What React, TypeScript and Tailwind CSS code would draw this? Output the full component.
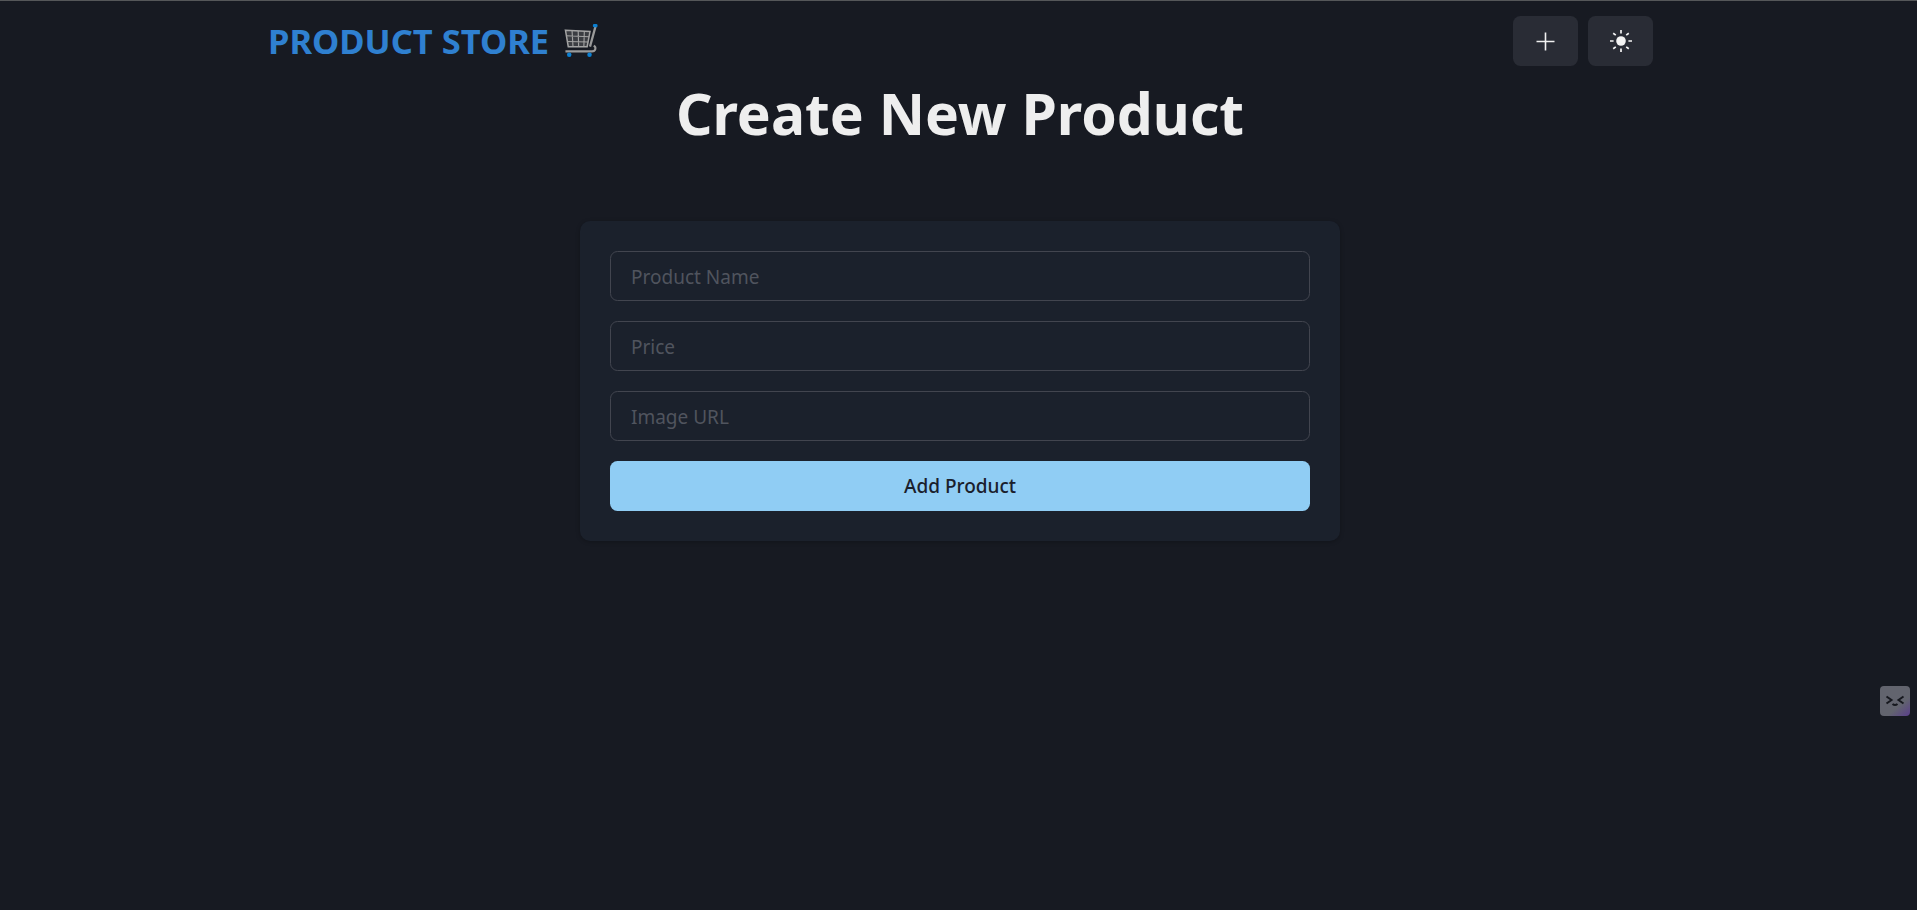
export default function App() {
  return (
    <div className="relative h-screen w-full overflow-hidden border-t border-[#555759] bg-[#171a22] font-['Noto_Sans','Open_Sans',sans-serif]">
      <div className="mx-auto w-[1920px]">
        {/* Navbar */}
        <nav className="mx-auto flex h-[80px] w-[1386px] items-center justify-between pl-[1px]">
          <div className="flex items-center gap-[15px]">
            <span className="text-[34.5px] font-bold leading-none text-[#2f80d0]">PRODUCT STORE</span>
            <CartIcon />
          </div>
          <div className="flex items-center gap-[10px]">
            <button className="flex h-[50px] w-[65px] items-center justify-center rounded-[7.5px] bg-[#292c35] text-[#f0f0f0]">
              <svg width="19" height="19" viewBox="0 0 19 19">
                <path d="M9.5 0.5V18.5M0.5 9.5H18.5" stroke="currentColor" strokeWidth="1.6" fill="none" />
              </svg>
            </button>
            <button className="flex h-[50px] w-[65px] items-center justify-center rounded-[7.5px] bg-[#292c35] text-[#f4f4f4]">
              <svg width="24" height="24" viewBox="0 0 24 24">
                <circle cx="12" cy="12" r="4.8" fill="currentColor" />
                <path
                  d="M12 1v3.6M12 19.4V23M1 12h3.6M19.4 12H23M4.2 4.2l2.6 1.9M19.8 4.2l-2.6 1.9M4.2 19.8l2.6-1.9M19.8 19.8l-2.6-1.9"
                  stroke="currentColor"
                  strokeWidth="1.7"
                  fill="none"
                />
              </svg>
            </button>
          </div>
        </nav>

        <main className="flex flex-col items-center">
          <h1 className="mt-[-4px] text-[57px] font-bold leading-[72px] text-[#eeeeee]">Create New Product</h1>

          <div className="mt-[72px] flex w-[760px] flex-col gap-[20px] rounded-[10px] bg-[#1b212c] p-[30px] shadow-[0_1px_4px_rgba(0,0,0,0.25)]">
            <input
              placeholder="Product Name"
              className="h-[50px] w-full rounded-[7.5px] border border-[#42454f] bg-transparent px-[20px] pt-[2px] text-[19px] outline-none placeholder:text-[#50545e]"
            />
            <input
              placeholder="Price"
              className="h-[50px] w-full rounded-[7.5px] border border-[#42454f] bg-transparent px-[20px] pt-[2px] text-[19px] outline-none placeholder:text-[#50545e]"
            />
            <input
              placeholder="Image URL"
              className="h-[50px] w-full rounded-[7.5px] border border-[#42454f] bg-transparent px-[20px] pt-[2px] text-[19px] outline-none placeholder:text-[#50545e]"
            />
            <button className="h-[50px] w-full rounded-[7.5px] bg-[#90cdf4] text-[19px] font-medium text-[#1a202c]">
              Add Product
            </button>
          </div>
        </main>
      </div>

      {/* floating extension widget */}
      <div className="absolute left-[1880px] top-[685px] flex h-[30px] w-[30px] items-center justify-center rounded-[4px] bg-[linear-gradient(140deg,#62646e_65%,#5a3f8c_100%)]">
        <svg width="20" height="14" viewBox="0 0 20 14">
          <path d="M1.5 2.5l5 3.5-5 3.5M18.5 2.5l-5 3.5 5 3.5M7.5 10q2.5 2 5 0" stroke="#16181e" strokeWidth="2" fill="none" />
        </svg>
      </div>
    </div>
  );
}

function CartIcon() {
  return (
    <svg width="35" height="34" viewBox="0 0 36 36">
      <path d="M1 6.5L27 8L24 24H4Z" fill="#3b3d42" stroke="#a3a3a3" strokeWidth="1.6" />
      <path
        d="M1.6 12.5L26 13.5M2.6 18.5L25 19M8 7L9 24M14.5 7.5L15 24M21 7.5L20.5 24"
        stroke="#a3a3a3"
        strokeWidth="1.2"
        fill="none"
      />
      <path d="M33 2L27 24" stroke="#9a9a9a" strokeWidth="2.4" fill="none" />
      <path
        d="M1 29H29C33 29 34 25 31 23"
        stroke="#9a9a9a"
        strokeWidth="2.2"
        fill="none"
      />
      <rect x="30" y="0" width="5" height="3.5" rx="1.5" fill="#0b7fd1" />
      <circle cx="5" cy="32.5" r="2.4" fill="#0b7fd1" />
      <circle cx="26.5" cy="32.5" r="2.4" fill="#0b7fd1" />
    </svg>
  );
}
